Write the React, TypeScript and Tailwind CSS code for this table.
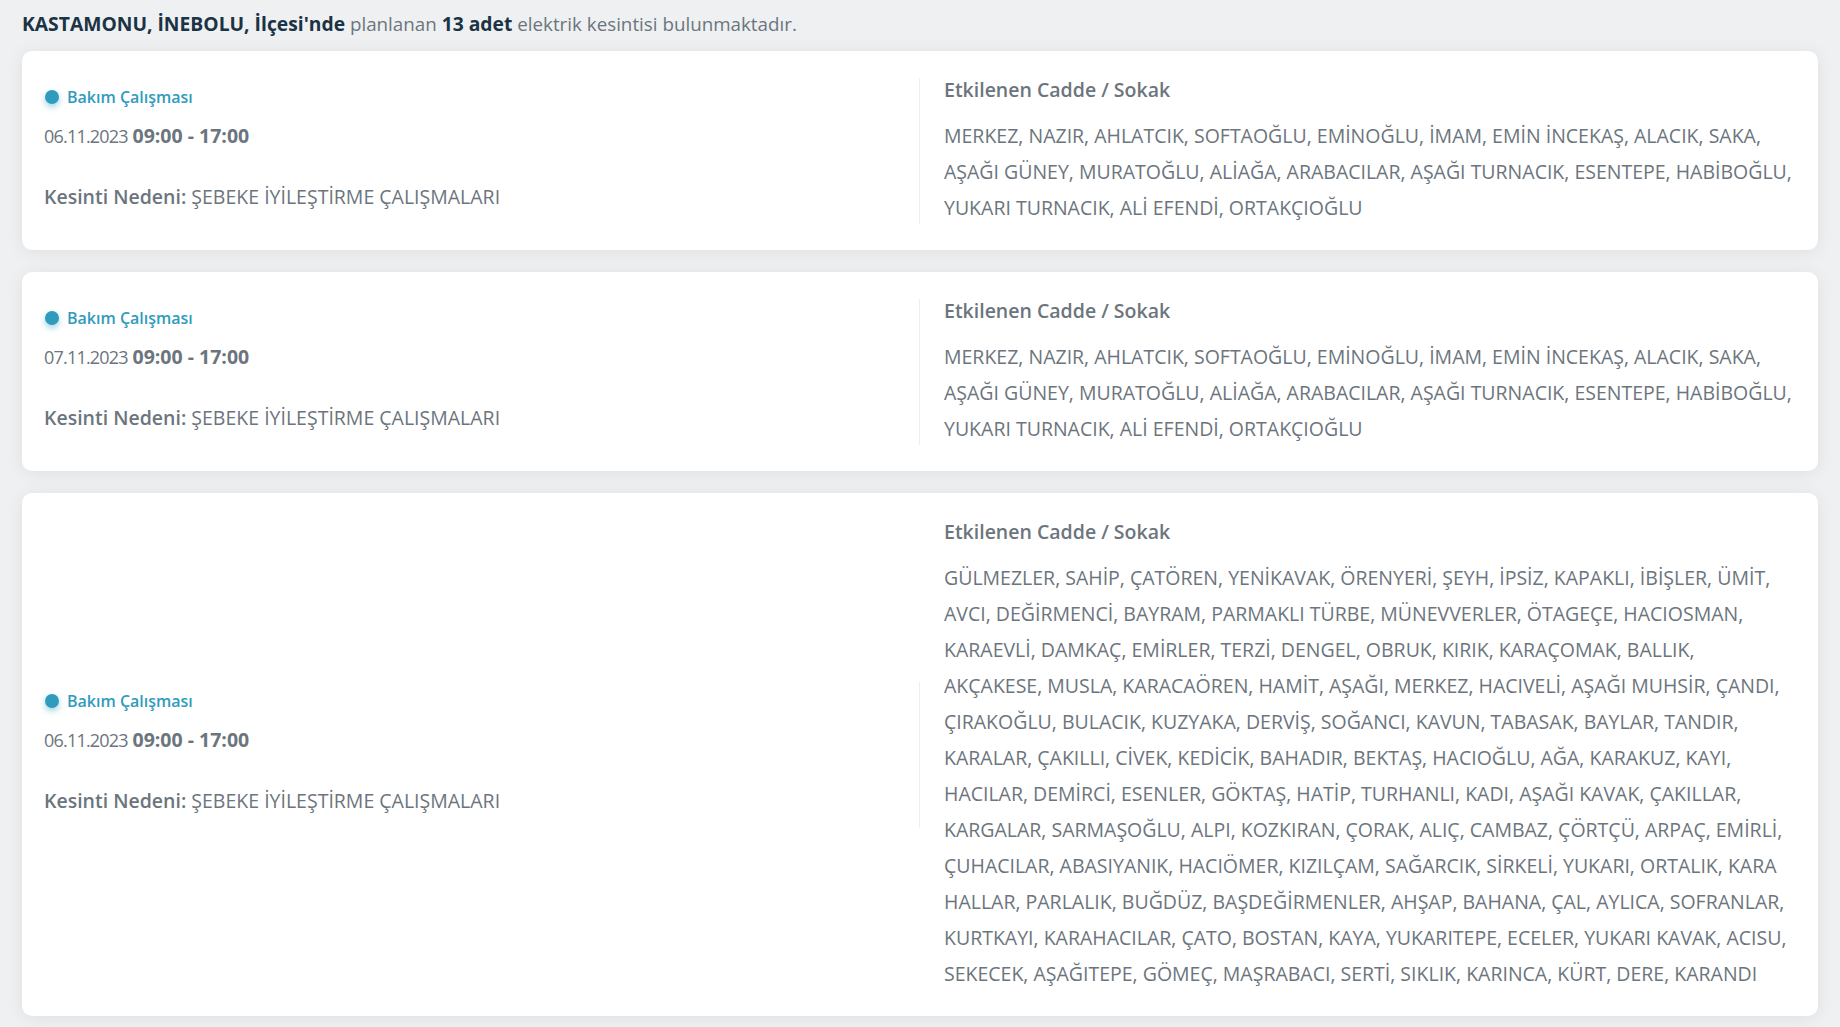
import React from "react";

type Outage = {
  date: string;
  time: string;
  reason: string;
  streets: string[];
};

const LIST1 = [
  "MERKEZ, NAZIR, AHLATCIK, SOFTAOĞLU, EMİNOĞLU, İMAM, EMİN İNCEKAŞ, ALACIK, SAKA,",
  "AŞAĞI GÜNEY, MURATOĞLU, ALİAĞA, ARABACILAR, AŞAĞI TURNACIK, ESENTEPE, HABİBOĞLU,",
  "YUKARI TURNACIK, ALİ EFENDİ, ORTAKÇIOĞLU",
];

const LIST3 = [
  "GÜLMEZLER, SAHİP, ÇATÖREN, YENİKAVAK, ÖRENYERİ, ŞEYH, İPSİZ, KAPAKLI, İBİŞLER, ÜMİT,",
  "AVCI, DEĞİRMENCİ, BAYRAM, PARMAKLI TÜRBE, MÜNEVVERLER, ÖTAGEÇE, HACIOSMAN,",
  "KARAEVLİ, DAMKAÇ, EMİRLER, TERZİ, DENGEL, OBRUK, KIRIK, KARAÇOMAK, BALLIK,",
  "AKÇAKESE, MUSLA, KARACAÖREN, HAMİT, AŞAĞI, MERKEZ, HACIVELİ, AŞAĞI MUHSİR, ÇANDI,",
  "ÇIRAKOĞLU, BULACIK, KUZYAKA, DERVİŞ, SOĞANCI, KAVUN, TABASAK, BAYLAR, TANDIR,",
  "KARALAR, ÇAKILLI, CİVEK, KEDİCİK, BAHADIR, BEKTAŞ, HACIOĞLU, AĞA, KARAKUZ, KAYI,",
  "HACILAR, DEMİRCİ, ESENLER, GÖKTAŞ, HATİP, TURHANLI, KADI, AŞAĞI KAVAK, ÇAKILLAR,",
  "KARGALAR, SARMAŞOĞLU, ALPI, KOZKIRAN, ÇORAK, ALIÇ, CAMBAZ, ÇÖRTÇÜ, ARPAÇ, EMİRLİ,",
  "ÇUHACILAR, ABASIYANIK, HACIÖMER, KIZILÇAM, SAĞARCIK, SİRKELİ, YUKARI, ORTALIK, KARA",
  "HALLAR, PARLALIK, BUĞDÜZ, BAŞDEĞİRMENLER, AHŞAP, BAHANA, ÇAL, AYLICA, SOFRANLAR,",
  "KURTKAYI, KARAHACILAR, ÇATO, BOSTAN, KAYA, YUKARITEPE, ECELER, YUKARI KAVAK, ACISU,",
  "SEKECEK, AŞAĞITEPE, GÖMEÇ, MAŞRABACI, SERTİ, SIKLIK, KARINCA, KÜRT, DERE, KARANDI",
];

const outages: Outage[] = [
  { date: "06.11.2023", time: "09:00 - 17:00", reason: "ŞEBEKE İYİLEŞTİRME ÇALIŞMALARI", streets: LIST1 },
  { date: "07.11.2023", time: "09:00 - 17:00", reason: "ŞEBEKE İYİLEŞTİRME ÇALIŞMALARI", streets: LIST1 },
  { date: "06.11.2023", time: "09:00 - 17:00", reason: "ŞEBEKE İYİLEŞTİRME ÇALIŞMALARI", streets: LIST3 },
];

function Card({ o }: { o: Outage }) {
  return (
    <div className="flex items-center rounded-[10px] bg-white pt-[25px] pb-[24px] shadow-[0_2px_18px_rgba(0,0,0,0.07)]">
      <div className="w-1/2 border-r border-[#eceef0] pl-[22px] pt-[7px] pb-[13px]">
        <div className="flex items-center">
          <span className="ml-[1px] h-[14px] w-[14px] rounded-full bg-[#2f9bbd] shadow-[0_3px_6px_rgba(47,155,189,0.45)]" />
          <span className="ml-[8px] text-[16px] font-semibold leading-[24px] text-[#2f9bbd]">
            Bakım Çalışması
          </span>
        </div>
        <div className="mt-[13px] text-[18px] leading-[28px] text-[#6c757d]">
          <span className="tracking-[-0.8px]">{o.date}</span>{" "}
          <span className="text-[19.5px] font-bold">{o.time}</span>
        </div>
        <div className="mt-[33px] text-[19.5px] leading-[28px] text-[#6c757d]">
          <span className="font-semibold">Kesinti Nedeni:</span> {o.reason}
        </div>
      </div>
      <div className="w-1/2 pl-[24px] pr-[18px]">
        <div className="mb-[15px] text-[19.5px] font-semibold leading-[27px] text-[#6c757d]">
          Etkilenen Cadde / Sokak
        </div>
        <div className="text-[19.5px] leading-[36px] text-[#6c757d]">
          {o.streets.map((line, i) => (
            <React.Fragment key={i}>
              {line}
              {i < o.streets.length - 1 && <br />}
            </React.Fragment>
          ))}
        </div>
      </div>
    </div>
  );
}

export default function App() {
  return (
    <div className="min-h-screen bg-[#eef0f2] px-[22px] pt-[10px] pb-[12px] font-['Open_Sans',sans-serif]">
      <p className="text-[18.8px] leading-[28px] text-[#6c757d]">
        <span className="text-[19.3px] font-bold text-[#1b3344]">KASTAMONU, İNEBOLU, İlçesi'nde</span> planlanan{" "}
        <span className="text-[19.3px] font-bold text-[#1b3344]">13 adet</span> elektrik kesintisi bulunmaktadır.
      </p>
      <div className="mt-[13px] flex flex-col gap-[22px]">
        {outages.map((o, i) => (
          <Card key={i} o={o} />
        ))}
      </div>
    </div>
  );
}
